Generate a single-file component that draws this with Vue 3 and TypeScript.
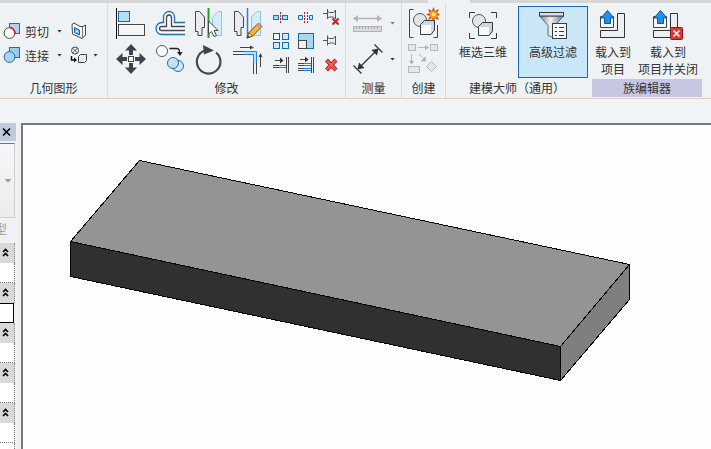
<script setup lang="ts">
import { ref } from 'vue'

interface PropertyGroup {
  id: number
  value: string
  active: boolean
}

const groups = ref<PropertyGroup[]>([
  { id: 1, value: '', active: false },
  { id: 2, value: '', active: true },
  { id: 3, value: '', active: false },
  { id: 4, value: '', active: false },
  { id: 5, value: '', active: false },
])

const filterActive = ref<boolean>(true)
</script>

<template>
  <div class="app">
    <div class="tabs"><span class="tab-before"></span><span class="tab-open"></span><span class="tab-after"></span></div>

    <header class="ribbon">
      <section class="panel">
        <div class="body geometry">
          <div class="row">
            <button class="tool label-tool" type="button">
              <svg width="18" height="18" viewBox="0 0 18 18">
                <rect x="6.5" y="1.5" width="10" height="10" fill="#a9d3ef" stroke="#1c6fb5" />
                <circle cx="6.5" cy="11" r="5.4" fill="#fff" stroke="#444" />
                <path d="M6.5 5.6a5.4 5.4 0 0 1 5.4 5.4" fill="none" stroke="#f00" stroke-width="1.5" />
              </svg>
              <span>剪切</span><i class="caret"></i>
            </button>
            <button class="tool" type="button" aria-label="墙洞口">
              <svg width="18" height="18" viewBox="0 0 18 18">
                <path d="M2 2.500L4 1l6 3.500h3L15.500 3v10L12 16.500 2.500 12z" fill="#f5f7f8" stroke="#444" />
                <path d="M12.500 5v11.500" fill="none" stroke="#777" />
                <path d="M4.500 5.500l5 2.500v5l-5-2.500z" fill="#5cb0ec" stroke="#1769b0" />
                <path d="M6 8l2 1v2L6 10z" fill="#e5f5ff" />
              </svg>
            </button>
          </div>
          <div class="row">
            <button class="tool label-tool" type="button">
              <svg width="18" height="18" viewBox="0 0 18 18">
                <rect x="6.5" y="1.500" width="10" height="10" fill="#9ccbea" stroke="#1c6fb5" />
                <circle cx="6.500" cy="11" r="5.400" fill="#a9d3ef" stroke="#1c6fb5" />
              </svg>
              <span>连接</span><i class="caret"></i>
            </button>
            <button class="tool" type="button" aria-label="连接端切割">
              <svg width="18" height="18" viewBox="0 0 18 18">
                <circle cx="5" cy="4.500" r="3.500" fill="#fff" stroke="#444" />
                <path d="M2.500 2l5 5m0-5l-5 5" stroke="#444" />
                <path d="M1.500 10v4h3" fill="none" stroke="#111" stroke-width="1.500" />
                <path d="M4 11.500l3 2.500-3 2.500z" fill="#111" />
                <path d="M8.500 10.500l2-2h6v6l-2 2h-6z" fill="#e9ebec" stroke="#444" />
              </svg>
              <i class="caret"></i>
            </button>
          </div>
        </div>
        <h2>几何图形</h2>
      </section>

      <section class="panel">
        <div class="body modify">
          <div class="large-grid">
            <button class="tool" type="button" aria-label="对齐">
              <svg width="32" height="32" viewBox="0 0 32 32">
                <path d="M1.500 1v31" stroke="#111" />
                <rect x="3.500" y="4.500" width="11" height="10" fill="#b4def6" stroke="#1769b0" />
                <rect x="3.500" y="17.500" width="26" height="11" fill="#f4f5f7" stroke="#444" />
              </svg>
            </button>
            <button class="tool" type="button" aria-label="偏移">
              <svg width="32" height="32" viewBox="0 0 32 32" fill="none">
                <path d="M31 15.500H20.500V10a5.500 5.500 0 0 0-11 0v5.500H8a6 6 0 0 0 0 12H31" fill="#f7f9fa" stroke="#1a6fbd" stroke-width="1.300" />
                <path d="M31 19.500H17.500V11a2.500 3 0 0 0-5 0v8.500H7.500a2 2 0 0 0 0 4H31" stroke="#444852" stroke-width="1.300" />
              </svg>
            </button>
            <button class="tool" type="button" aria-label="镜像拾取轴">
              <svg width="32" height="32" viewBox="0 0 32 32">
                <path d="M2.500 4.500h3.500L11.500 10v10h-2v6.500h-3V20.500H2.500z" fill="#e7e9ec" />
                <path d="M2.500 4.500h4L11.500 10v10.500H9v8H5V24.500H2.500z" fill="#e9ebee" stroke="#444" />
                <path d="M28.500 4.500h-3.500L19.500 10v10.500l3 8h6z" fill="#d5edf9" stroke="#92c3e0" />
                <path d="M15.500 1v30" stroke="#1f9b1f" stroke-width="2" />
                <path d="M15.500 14v13l3-2.500 2.500 5 2.500-1-2.500-5h4z" fill="#fff" stroke="#444" />
              </svg>
            </button>
            <button class="tool" type="button" aria-label="镜像绘制轴">
              <svg width="32" height="32" viewBox="0 0 32 32">
                <path d="M2.500 4.500h4L11.500 10v10.500H9v8H5V24.500H2.500z" fill="#e9ebee" stroke="#444" />
                <path d="M28.500 4.500h-3.500L19.500 10v18.500h9z" fill="#d5edf9" stroke="#92c3e0" />
                <path d="M15.500 1v30" stroke="#2184d8" stroke-width="1.500" />
                <path d="M15 31l2-5.500L26.500 16l3.500 3.500L20.500 29z" fill="#f7b733" stroke="#704d1c" />
                <path d="M24.500 18l2-2 3.500 3.500-2 2z" fill="#e48b83" />
                <path d="M15 31l2-5.500 3.500 3.500z" fill="#f9e1b4" stroke="#704d1c" />
                <path d="M15 31l1-2.500 1.500 1.500z" fill="#222" />
              </svg>
            </button>
            <button class="tool" type="button" aria-label="移动">
              <svg width="32" height="32" viewBox="0 0 32 32" fill="#3f444c">
                <path d="M16 1l6 6.500h-4V12h-4V7.500h-4zM16 31l-6-6.500h4V20h4v4.500h4zM1 16l6.500-6v4H12v4H7.500v4zM31 16l-6.500 6v-4H20v-4h4.500v-4z" />
                <rect x="13.500" y="13.500" width="5" height="5" fill="#fff" stroke="#444" />
              </svg>
            </button>
            <button class="tool" type="button" aria-label="复制">
              <svg width="32" height="32" viewBox="0 0 32 32">
                <circle cx="8" cy="8" r="5.500" fill="#fff" stroke="#555" />
                <path d="M15.500 5.500h7c3 0 3 2 3 5" fill="none" stroke="#222" stroke-width="1.300" />
                <path d="M23 9h5.500l-2.500 4z" fill="#222" />
                <circle cx="24" cy="23" r="5.500" fill="#d0e9f8" stroke="#1c6fb5" />
                <circle cx="19" cy="20" r="5.500" fill="#c2e2f6" fill-opacity=".9" stroke="#1c6fb5" />
              </svg>
            </button>
            <button class="tool" type="button" aria-label="旋转">
              <svg width="32" height="32" viewBox="0 0 32 32">
                <path d="M23 9.500A11.800 11.800 0 1 1 12 7.500" fill="none" stroke="#444850" stroke-width="2.200" />
                <path d="M10 2l11 5.500-10 4z" fill="#3f444c" />
              </svg>
            </button>
            <button class="tool" type="button" aria-label="修剪延伸为角">
              <svg width="32" height="32" viewBox="0 0 32 32" fill="none">
                <path d="M12 10h11v10" stroke="#b5e1fb" stroke-width="2" />
                <path d="M1 8.500h11M1 11.500h11M21.500 20v11M24.500 20v11" stroke="#444" />
                <path d="M12 8.500h12.500V20M12 11.500h9.500V20" stroke="#1683e0" />
                <path d="M8 4.500h12M28.500 24V12" stroke="#444" />
                <path d="M18 2.500l4 2-4 2zM26.500 14l2-4 2 4z" fill="#444" />
              </svg>
            </button>
          </div>
          <div class="small-grid">
            <button class="tool" type="button" aria-label="拆分图元">
              <svg width="17" height="18" viewBox="0 0 17 18">
                <rect x="1.500" y="7.500" width="14" height="4" fill="#a5d7f5" stroke="#1c6fb5" />
                <path d="M6.500 7v5M10.500 7v5" stroke="#1c6fb5" /><path d="M8.500 3v13" stroke="#eef2f5" stroke-width="3" />
                <path d="M8.500 4v12" stroke="#d31616" stroke-dasharray="2 1" />
              </svg>
            </button>
            <button class="tool" type="button" aria-label="用间隙拆分">
              <svg width="17" height="18" viewBox="0 0 17 18">
                <path d="M5.500 7.500h-4v4h4zM12.500 7.500h3v4h-3z" fill="#c9e8fa" stroke="#1c6fb5" />
                <path d="M7.500 4v11M10.500 4v11" stroke="#d31616" stroke-dasharray="2 1" />
              </svg>
            </button>
            <button class="tool" type="button" aria-label="解锁">
              <svg width="17" height="18" viewBox="0 0 17 18">
                <path d="M1 5.500h4M5.500 1v10M5.500 3.500l2 1h4l2-2.500v9l-2-2h-4l-2 1" fill="#eceeef" stroke="#555" />
                <path d="M10.500 10.500l6 6m0-6l-6 6" stroke="#c61b1b" stroke-width="2" />
              </svg>
            </button>
            <button class="tool" type="button" aria-label="阵列">
              <svg width="17" height="18" viewBox="0 0 17 18" fill="#cfeafa" stroke="#1769b0">
                <rect x="1.500" y="1.500" width="6" height="6" fill="#fff" stroke="#444" />
                <rect x="10.500" y="1.500" width="6" height="6" /><rect x="1.500" y="10.500" width="6" height="6" /><rect x="10.500" y="10.500" width="6" height="6" />
              </svg>
            </button>
            <button class="tool" type="button" aria-label="缩放">
              <svg width="17" height="18" viewBox="0 0 17 18">
                <rect x="1.500" y="1.500" width="15" height="15" fill="#a5d9f2" stroke="#1769b0" />
                <rect x="1.500" y="8.500" width="8" height="8" fill="#f3f3f3" stroke="#444" />
              </svg>
            </button>
            <button class="tool" type="button" aria-label="锁定">
              <svg width="17" height="18" viewBox="0 0 17 18">
                <path d="M1 8.500h4M5.500 3.500v10M5.500 5.500l2 1h4l2-2.500v9l-2-2h-4l-2 1" fill="#eceeef" stroke="#555" />
              </svg>
            </button>
            <button class="tool" type="button" aria-label="修剪延伸单个图元">
              <svg width="17" height="18" viewBox="0 0 17 18">
                <path d="M1 9.500h6M1 11.500h6M3 4.500h6M14.500 1v16M16.500 1v16" stroke="#444" />
                <path d="M7 9.500h7M7 11.500h7" stroke="#1683e0" /><path d="M8 1.500l3.500 3L8 7.500z" fill="#333" />
              </svg>
            </button>
            <button class="tool" type="button" aria-label="修剪延伸多个图元">
              <svg width="17" height="18" viewBox="0 0 17 18">
                <path d="M1 7.500h6M1 9.500h6M1 12.500h6M1 14.500h6M3 3.500h6M14.500 1v16M16.500 1v16" stroke="#444" />
                <path d="M7 7.500h7M7 9.500h7M7 12.500h7M7 14.500h7" stroke="#1683e0" /><path d="M8 .5l3.500 3L8 6.500z" fill="#333" />
              </svg>
            </button>
            <button class="tool" type="button" aria-label="删除">
              <svg width="17" height="18" viewBox="0 0 17 18">
                <path d="M4.500 4l9.500 10m0-10L4.500 14" stroke="#b81a1a" stroke-width="4" />
                <path d="M5 4.500l8.500 9m0-9L5 13.500" stroke="#fa6055" stroke-width="2" />
              </svg>
            </button>
          </div>
        </div>
        <h2>修改</h2>
      </section>

      <section class="panel">
        <div class="body measure">
          <button class="tool" type="button" aria-label="测量两个参照之间的距离">
            <svg width="32" height="32" viewBox="0 0 32 32">
              <path d="M4 11.500h23" stroke="#b4b4b4" stroke-width="1.500" />
              <path d="M1 11.500L6 8v7zM30 11.500L25 8v7z" fill="#b4b4b4" />
              <rect x="1.500" y="19.500" width="28" height="5" fill="#dadada" stroke="#b4b4b4" />
              <path d="M4.500 20v2m3-2v2m3-2v2m3-2v2m3-2v2m3-2v2m3-2v2m3-2v2" stroke="#aaa" />
            </svg>
            <i class="caret muted"></i>
          </button>
          <button class="tool" type="button" aria-label="对齐尺寸标注">
            <svg width="32" height="32" viewBox="0 0 32 32">
              <path d="M1.500 22.500l8 8M22.500 1.500l8 8M7 25L25 7" stroke="#333" stroke-width="1.300" />
              <path d="M5.500 26.500l1.500-7 5.500 5.500zM26.500 5.500l-1.500 7L19.500 7z" fill="#333" />
            </svg>
            <i class="caret"></i>
          </button>
        </div>
        <h2>测量</h2>
      </section>

      <section class="panel">
        <div class="body create">
          <button class="tool" type="button" aria-label="创建组">
            <svg width="32" height="32" viewBox="0 0 32 32">
              <path d="M5.500 2.500h-4v28h4M25.500 30.500h4V18" fill="none" stroke="#444" />
              <circle cx="12" cy="13" r="6.500" fill="#e2e4e6" stroke="#555" />
              <path d="M12.500 17.500l4-4h10v9.500l-3.500 4.500H12.500z" fill="#d3d6da" stroke="#343b48" />
              <path d="M13 18h10v9H13z" fill="#f9fafb" />
              <path d="M25.500 0l1.500 4 4-2-2 4 3 1.500-3 1.500 2 4-4-2-1.500 4-1.500-4-4 2 2-4-4-1.500L22 6l-2-4 4 2z" fill="#d92b12" />
              <circle cx="25.500" cy="7.500" r="4" fill="#ff9714" /><circle cx="25.500" cy="7.500" r="2" fill="#fff56a" />
            </svg>
          </button>
          <button class="tool" type="button" aria-label="创建类似">
            <svg width="32" height="32" viewBox="0 0 32 32" fill="#e5e6e6" stroke="#b8b8b8">
              <rect x=".5" y="1.500" width="7" height="6" /><rect x="22.500" y="1.500" width="7" height="6" /><rect x=".5" y="23.500" width="11" height="6" />
              <path d="M23.500 18.500l5 5-5 5-5-5zM10 4.500h8M3.500 11v8M11 11l6 6" />
              <path d="M17.500 2.500l3 2-3 2zM1.500 18l2 3 2-3zM17.500 14v4h-4z" fill="#b0b0b0" />
            </svg>
          </button>
        </div>
        <h2>创建</h2>
      </section>

      <section class="panel borderless">
        <div class="body commands">
          <button class="tool command" type="button">
            <svg width="32" height="32" viewBox="0 0 32 32">
              <path d="M2.500 9V3.500H8M24 3.500h5.500V9M2.500 24v5.500H8M24 29.500h5.500V24" fill="none" stroke="#333b48" />
              <circle cx="12" cy="12" r="6.500" fill="#e4e6e8" stroke="#555" />
              <path d="M11.500 17.500l4-4h10v8.500l-3.500 4.500H11.500z" fill="#d0d3d8" stroke="#343b48" />
              <path d="M12 18h10v8H12z" fill="#f8f9fa" />
            </svg>
            <span>框选三维</span>
          </button>
          <button class="tool command" :class="{ selected: filterActive }" :aria-pressed="filterActive" type="button" @click="filterActive = !filterActive">
            <svg width="32" height="32" viewBox="0 0 32 32">
              <defs>
                <linearGradient id="metal"><stop offset="0" stop-color="#777f88" /><stop offset=".45" stop-color="#f1f2f3" /><stop offset="1" stop-color="#737b84" /></linearGradient>
              </defs>
              <path d="M2.500 7L11 16.500v10l7 2.500V16.500L26.500 7z" fill="url(#metal)" stroke="#646c75" />
              <rect x="2.500" y="3.500" width="24" height="3.500" fill="#dde1e5" stroke="#333b48" />
              <rect x="15.500" y="14.500" width="14" height="15" fill="#f7f8f9" stroke="#333b48" />
              <path d="M18 18.500h2m-2 4h2m-2 4h2M22 18.500h5M22 22.500h5M22 26.500h5" stroke="#333b48" />
            </svg>
            <span>高级过滤</span>
          </button>
        </div>
        <h2>建模大师（通用）</h2>
      </section>

      <section class="panel family">
        <div class="body loaders">
          <button class="tool command load" type="button">
            <svg width="32" height="32" viewBox="0 0 32 32">
              <path d="M3.500 7.500h13v11h-13z" fill="#f5f6f7" stroke="#444" />
              <path d="M20.500 4.500h7v24h-24v-7h17z" fill="#eceeef" stroke="#333" />
              <path d="M10.500 1.500L17 9h-3.500v5.500h-6V9H4z" fill="#228ee8" stroke="#0b559c" />
            </svg>
            <span>载入到<br>项目</span>
          </button>
          <button class="tool command load-close" type="button">
            <svg width="32" height="32" viewBox="0 0 32 32">
              <path d="M1.500 7.500h13v11h-13z" fill="#f5f6f7" stroke="#444" />
              <path d="M18.500 4.500h7v24h-24v-7h17z" fill="#eceeef" stroke="#333" />
              <path d="M8.500 1.500L15 9h-3.500v5.500h-6V9H2z" fill="#228ee8" stroke="#0b559c" />
              <rect x="18.500" y="18.500" width="12" height="12" rx="1" fill="#d93a36" stroke="#8e1717" />
              <path d="M21.500 21.500l6 6m0-6l-6 6" stroke="#fff" stroke-width="1.500" />
            </svg>
            <span>载入到<br>项目并关闭</span>
          </button>
        </div>
        <h2>族编辑器</h2>
      </section>
    </header>

    <div class="options"></div>

    <main class="workspace">
      <aside class="palette">
        <div class="palette-head">
          <button class="tool" type="button" aria-label="关闭">
            <svg width="10" height="10" viewBox="0 0 10 10"><path d="M1 1.500l7 7m0-7l-7 7" stroke="#000" stroke-width="1.600" /></svg>
          </button>
        </div>
        <button class="type-picker" type="button" aria-label="类型选择器"><i class="wide-caret"></i></button>
        <div class="edit-type"><span>型</span></div>
        <section v-for="group in groups" :key="group.id">
          <button class="group-head" type="button" aria-label="折叠">
            <svg width="8" height="9" viewBox="0 0 8 9"><path d="M1 4l2.500-2.500L6 4M1 8l2.500-2.500L6 8" fill="none" stroke="#000" stroke-width="1.600" /></svg>
          </button>
          <input v-model="group.value" class="group-value" :class="{ active: group.active }" type="text" aria-label="参数值">
        </section>
        <div class="palette-rest"></div>
      </aside>

      <div class="viewport">
        <svg class="model" width="640" height="270" viewBox="0 0 640 270" role="img" aria-label="三维模型">
          <g stroke="#000" stroke-linejoin="round" shape-rendering="crispEdges">
            <path d="M116.500 35.500l490 104-69 82-490-105z" fill="#949494" />
            <path d="M47.500 116.500l490 105v34l-490-104z" fill="#303030" />
            <path d="M606.500 139.500v35l-69 81v-34z" fill="#7f7f7f" />
          </g>
        </svg>
      </div>
    </main>
  </div>
</template>

<style>
body { background: #eef2f5; }
</style>

<style scoped>
.app {
  display: flex;
  flex-direction: column;
  min-height: 100vh;
  font: 12px/17px "Noto Sans CJK SC", sans-serif;
  color: #333;
  background: #eef2f5;
}
.app *, .app { box-sizing: border-box; }
svg { display: block; flex: none; }
button {
  margin: 0;
  padding: 0;
  border: 0;
  background: none;
  font: inherit;
  color: inherit;
}
.tabs { display: flex; height: 3px; }
.tab-before { flex: 428; background: #d6d6d6; }
.tab-open { flex: 42; }
.tab-after { flex: 241; background: #d6d6d6; }

.ribbon {
  display: flex;
  height: 96px;
  border-bottom: 1px solid #d8cdc7;
}
.panel {
  display: flex;
  flex-direction: column;
  flex: none;
  border-right: 1px solid #dcd8d6;
}
.panel.borderless { border-right: 0; }
.body { height: 76px; }
h2 {
  margin: 0;
  font-size: 12px;
  font-weight: 400;
  line-height: 18px;
  text-align: center;
  white-space: nowrap;
}
.tool {
  display: flex;
  align-items: center;
  justify-content: center;
}
.caret {
  width: 5px;
  height: 3px;
  background: #333;
  clip-path: polygon(0 0, 100% 0, 50% 100%);
}
.caret.muted { background: #777; }

.geometry {
  width: 107px;
  padding: 16px 0 0 3px;
}
.row { display: flex; height: 24px; gap: 8px; }
.label-tool { gap: 4px; }
.row .tool:last-child { gap: 5px; }
.label-tool .caret { margin-left: 4px; }

.modify { display: flex; padding: 2px 2px 0 3px; gap: 1px; }
.large-grid {
  display: grid;
  grid-template-columns: repeat(4, 39px);
  grid-template-rows: repeat(2, 36px);
}
.small-grid {
  display: grid;
  grid-template-columns: repeat(3, 25px);
  grid-template-rows: repeat(3, 24px);
}
.measure {
  display: grid;
  grid-template-rows: repeat(2, 36px);
  width: 55px;
  padding-top: 2px;
}
.measure .tool { gap: 6px; }
.create {
  display: grid;
  grid-template-rows: repeat(2, 36px);
  width: 43px;
  padding-top: 2px;
}
.commands, .loaders { display: flex; padding-top: 3px; }
.commands { padding-left: 2px; }
.command {
  flex-direction: column;
  justify-content: flex-start;
  width: 70px;
  height: 72px;
  padding-top: 2px;
  gap: 2px;
  border: 1px solid transparent;
  white-space: nowrap;
}
.selected { border-color: #1667b5; background: #c9e7f7; }
.load { width: 50px; }
.load-close { width: 60px; }
.family { flex: 1; border-right: 0; }
.family h2 {
  margin: 0 9px 0 4px;
  background: #c7c7e3;
}

.options { height: 24px; background: #f1f4f6; }

.workspace { display: flex; flex: 1; }
.palette {
  display: flex;
  flex-direction: column;
  width: 16px;
  margin-right: 5px;
}
.palette-head {
  display: flex;
  align-items: center;
  height: 18px;
  padding-left: 2px;
  background: #bfcbdc;
}
.type-picker {
  display: flex;
  align-items: center;
  justify-content: flex-end;
  width: 15px;
  height: 75px;
  margin-top: 2px;
  padding-right: 2px;
  border-top: 1px solid #777;
  border-right: 1px solid #d0d0d0;
  border-bottom: 1px solid #d0d0d0;
  background: linear-gradient(#f4f6f8, #ececec);
}
.wide-caret {
  width: 8px;
  height: 4px;
  background: #999;
  clip-path: polygon(0 0, 100% 0, 50% 100%);
}
.edit-type {
  display: flex;
  justify-content: flex-end;
  width: 7px;
  height: 25px;
  padding-top: 2px;
  overflow: hidden;
  color: #999;
}
.group-head {
  display: flex;
  align-items: center;
  width: 15px;
  height: 20px;
  padding: 0 0 2px 2px;
  background: #d9d9d9;
  border-right: 1px dotted #888;
}
.group-value {
  display: block;
  width: 15px;
  height: 20px;
  padding: 0;
  border: 0;
  border-right: 1px dotted #777;
  border-bottom: 1px dotted #777;
  border-radius: 0;
  outline: 0;
  background: #fff;
  font: inherit;
}
.group-value.active {
  width: 14px;
  border: solid #000;
  border-width: 1px 1px 1px 0;
}
.palette-rest {
  flex: 1;
  width: 15px;
  border-right: 1px dotted #777;
  background: #fff;
}
.viewport {
  flex: 1;
  min-width: 0;
  overflow: hidden;
  border-top: 2px solid #777;
  border-left: 2px solid #777;
  background: #fdfdfd;
}
</style>
